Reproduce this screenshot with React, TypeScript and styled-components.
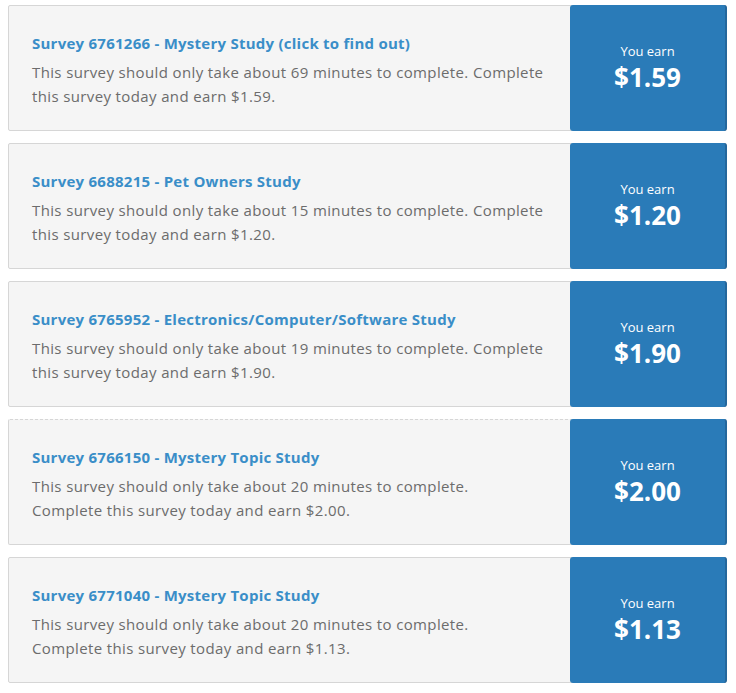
import React from "react";
import styled, { createGlobalStyle } from "styled-components";

const Global = createGlobalStyle`
  html, body { margin: 0; padding: 0; background: #ffffff; }
  body { font-family: "Open Sans", "Lato", sans-serif; }
`;

const Page = styled.div`
  display: flex;
  flex-direction: column;
  gap: 12px;
  padding: 5px 9px 0 8px;
  width: 736px;
  box-sizing: border-box;
`;

const Card = styled.div<{ $dashed?: boolean }>`
  display: flex;
  height: 126px;
  box-sizing: border-box;
  background: #f5f5f5;
  border: 1px solid #d6d6d6;
  border-top-style: ${(p) => (p.$dashed ? "dashed" : "solid")};
  border-radius: 2px;
`;

const Info = styled.div`
  flex: 1;
  display: flex;
  flex-direction: column;
  justify-content: center;
  padding: 4px 4px 0 23px;
`;

const Title = styled.div`
  color: #3a8ec8;
  font-size: 15px;
  font-weight: 700;
  line-height: 20px;
  letter-spacing: 0.25px;
  margin-bottom: 7px;
`;

const Desc = styled.div`
  color: #6c6c6c;
  font-size: 15px;
  line-height: 24px;
  letter-spacing: 0.37px;
  white-space: nowrap;
`;

const Earn = styled.div`
  width: 157px;
  margin: -1px -1px -1px 0;
  background: #2a7bb8;
  border-right: 2px solid #24679c;
  border-radius: 3px;
  display: flex;
  flex-direction: column;
  align-items: center;
  justify-content: center;
  color: #ffffff;
  padding-bottom: 2px;
  box-sizing: border-box;
`;

const EarnLabel = styled.div`
  font-size: 13px;
  line-height: 16px;
  margin-top: 1px;
`;

const Amount = styled.div`
  font-size: 26px;
  font-weight: 700;
  line-height: 32px;
  margin-top: 2px;
`;

const surveys = [
  { id: "6761266", name: "Mystery Study (click to find out)", pay: "$1.59", desc: ["This survey should only take about 69 minutes to complete. Complete", "this survey today and earn $1.59."] },
  { id: "6688215", name: "Pet Owners Study", pay: "$1.20", desc: ["This survey should only take about 15 minutes to complete. Complete", "this survey today and earn $1.20."] },
  { id: "6765952", name: "Electronics/Computer/Software Study", pay: "$1.90", desc: ["This survey should only take about 19 minutes to complete. Complete", "this survey today and earn $1.90."] },
  { id: "6766150", name: "Mystery Topic Study", pay: "$2.00", dashed: true, desc: ["This survey should only take about 20 minutes to complete.", "Complete this survey today and earn $2.00."] },
  { id: "6771040", name: "Mystery Topic Study", pay: "$1.13", desc: ["This survey should only take about 20 minutes to complete.", "Complete this survey today and earn $1.13."] },
];

export default function App() {
  return (
    <>
      <Global />
      <Page>
        {surveys.map((s) => (
          <Card key={s.id} $dashed={s.dashed}>
            <Info>
              <Title>
                Survey {s.id} - {s.name}
              </Title>
              <Desc>
                {s.desc[0]}
                <br />
                {s.desc[1]}
              </Desc>
            </Info>
            <Earn>
              <EarnLabel>You earn</EarnLabel>
              <Amount>{s.pay}</Amount>
            </Earn>
          </Card>
        ))}
      </Page>
    </>
  );
}
